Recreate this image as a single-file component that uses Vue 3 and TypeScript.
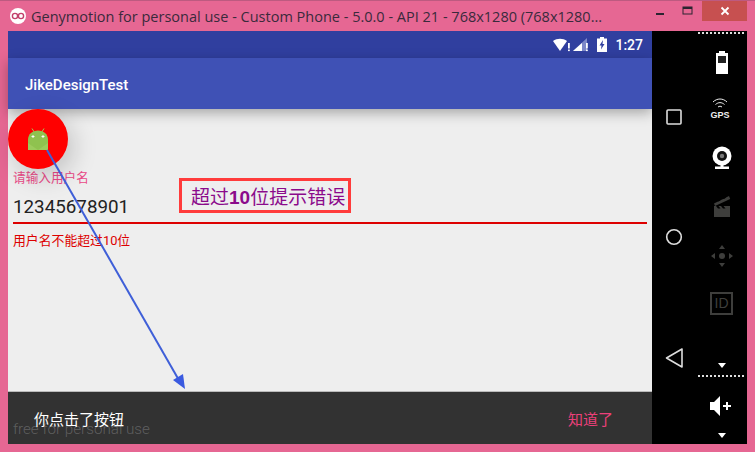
<script setup lang="ts">
const windowTitle = 'Genymotion for personal use - Custom Phone - 5.0.0 - API 21 - 768x1280 (768x1280...'
</script>

<template>
  <div class="window">
    <header class="title-bar">
      <svg class="geny-logo" width="18" height="18" viewBox="0 0 18 18">
        <circle cx="9" cy="9" r="8" fill="#fff" />
        <circle cx="6" cy="9" r="2.6" fill="none" stroke="#c2406c" stroke-width="1.4" />
        <circle cx="12" cy="9" r="2.6" fill="none" stroke="#c2406c" stroke-width="1.4" />
      </svg>
      <span class="title-text">{{ windowTitle }}</span>
      <div class="win-controls">
        <span class="win-btn">
          <svg width="10" height="10" viewBox="0 0 10 10"><rect x="1" y="7" width="8" height="2" fill="#2b2430" /></svg>
        </span>
        <span class="win-btn">
          <svg width="12" height="10" viewBox="0 0 12 10"><rect x="1" y="1" width="9" height="7" fill="none" stroke="#2b2430" stroke-width="1" /><rect x="1" y="1" width="9" height="2" fill="#2b2430" /></svg>
        </span>
        <span class="win-btn close">
          <svg width="10" height="10" viewBox="0 0 10 10"><path d="M1.5 1.5l7 7M8.5 1.5l-7 7" stroke="#fff" stroke-width="1.8" /></svg>
        </span>
      </div>
    </header>

    <div class="window-body">
      <main class="phone">
        <div class="status-bar">
          <svg width="20" height="14" viewBox="0 0 20 14">
            <path d="M0 3C4 0 10 0 14 3L7 13z" fill="#fff" />
            <rect x="15" y="5" width="1.800" height="5.500" fill="#fff" /><rect x="15" y="11.500" width="1.800" height="1.600" fill="#fff" />
          </svg>
          <svg class="signal" width="17" height="14" viewBox="0 0 17 14">
            <path d="M0 13L14 0v13z" fill="#7d88c8" />
            <path d="M0 13L9 5v8z" fill="#fff" />
            <rect x="13" y="5" width="1.800" height="5.500" fill="#fff" /><rect x="13" y="11.500" width="1.800" height="1.600" fill="#fff" />
          </svg>
          <svg class="battery" width="10" height="15" viewBox="0 0 10 15">
            <path d="M3 0h4v1.500h3V15H0V1.500h3z" fill="#fff" />
            <path d="M6 3L2.500 8.500h2L4 12.500l3.500-5.500h-2z" fill="#303f9f" />
          </svg>
          <span class="clock">1:27</span>
        </div>
        <div class="app-bar">JikeDesignTest</div>

        <div class="content">
          <div class="field">
            <label class="field-label">请输入用户名</label>
            <div class="field-value">12345678901</div>
            <div class="field-line"></div>
            <p class="field-error">用户名不能超过10位</p>
          </div>
        </div>

        <div class="snackbar">
          <span class="snack-text">你点击了按钮</span>
          <span class="snack-action">知道了</span>
        </div>

        <!-- 悬浮按钮 -->
        <button class="fab">
          <svg width="24" height="24" viewBox="0 0 24 24">
            <path d="M6 1.500l2.500 4M18 1.500l-2.500 4" stroke="#a4c95a" stroke-width="1" />
            <path d="M2 13C2 7 6.500 3.500 12 3.500s10 3.500 10 9.500v10H2z" fill="#8fc24f" />
            <path d="M2 16l10 7H2zM22 16L12 23h10z" fill="#9ccb5c" />
            <path d="M7 8v3M5.500 9.500h3M17 8v3M15.500 9.500h3" stroke="#fff" stroke-width="0.9" />
          </svg>
        </button>

        <div class="note">超过<b>10</b>位提示错误</div>
        <span class="watermark">free for personal use</span>
      </main>

      <aside class="toolbar">
        <nav class="nav-col">
          <svg width="24" height="24" viewBox="0 0 24 24"><rect x="5" y="5" width="14" height="14" rx="1" fill="none" stroke="#ddd" stroke-width="1.6" /></svg>
          <svg width="24" height="24" viewBox="0 0 24 24"><circle cx="12" cy="12" r="7.300" fill="none" stroke="#ddd" stroke-width="1.6" /></svg>
          <svg width="24" height="24" viewBox="0 0 24 24"><path d="M20 4V22L4.500 13z" fill="none" stroke="#ddd" stroke-width="1.600" stroke-linejoin="round" /></svg>
        </nav>
        <div class="tool-col">
          <span class="dots d1"></span>
          <svg class="t-battery" width="24" height="24" viewBox="0 0 24 24">
            <path d="M9 0h6v2h3v21H6V2h3z" fill="#fff" /><rect x="8" y="5" width="8" height="7" fill="#222" />
          </svg>
          <svg class="t-gps" width="30" height="24" viewBox="0 0 30 24">
            <path d="M6 6c4-4 10-4 14 0M8.500 8.500c3-2.500 6-2.500 9 0M11 11c1.500-1 2.500-1 4 0" fill="none" stroke="#eee" stroke-width="1" />
            <text x="13" y="22" text-anchor="middle" class="gps-text">GPS</text>
          </svg>
          <svg class="t-cam" width="24" height="24" viewBox="0 0 24 24">
            <circle cx="12" cy="10" r="9.500" fill="#fff" /><circle cx="12" cy="10" r="5" fill="#111" /><circle cx="12" cy="10" r="2.200" fill="#777" />
            <rect x="10.500" y="18" width="3" height="3" fill="#fff" /><rect x="5" y="20.500" width="14" height="2.500" fill="#fff" />
          </svg>
          <svg class="t-film" width="24" height="24" viewBox="0 0 24 24">
            <path d="M4 9.500L19 2l1.200 3L5 12z" fill="#3e3e3c" />
            <path d="M7.500 7.700l2-2.700 2.500-.9-2 2.700zM12.500 5.300l2-2.700 2.500-.9-2 2.700z" fill="#000" />
            <rect x="4" y="12" width="16" height="11" fill="#3e3e3c" />
            <path d="M6 12l2 2.500h2.500L8.500 12zM11 12l2 2.500h2.500L13.500 12z" fill="#000" />
          </svg>
          <svg class="t-dpad" width="24" height="24" viewBox="0 0 24 24">
            <circle cx="12" cy="12" r="3" fill="#3e3e3c" />
            <path d="M12 1l3 4H9zM12 23l-3-4h6zM1 12l4-3v6zM23 12l-4 3V9z" fill="#3e3e3c" />
          </svg>
          <div class="t-id">ID</div>
          <span class="mini-arrow a1"></span>
          <span class="dots d2"></span>
          <svg class="t-vol" width="28" height="24" viewBox="0 0 28 24">
            <path d="M2 8h4l6-6v20l-6-6H2z" fill="#fff" />
            <path d="M15 12h8M19 8v8" stroke="#fff" stroke-width="2" />
          </svg>
          <span class="mini-arrow a2"></span>
        </div>
      </aside>
    </div>

    <!-- 标注箭头 -->
    <svg class="pointer" width="755" height="452" viewBox="0 0 755 452">
      <path d="M47 150L180 382" stroke="#3f5fd8" stroke-width="2" />
      <path d="M185 389L173 380L183 374z" fill="#3a5ae0" />
    </svg>
  </div>
</template>

<style>
html,
body {
  margin: 0;
  background: #e66793;
}
</style>

<style scoped>
.window {
  position: relative;
  width: 755px;
  height: 452px;
  box-sizing: border-box;
  display: flex;
  flex-direction: column;
  background: #e66793;
  border-top: 1px solid #bd5a80;
  overflow: hidden;
}

.title-bar {
  height: 30px;
  flex-shrink: 0;
  display: flex;
  align-items: center;
  padding-left: 9px;
  padding-right: 8px;
}

.geny-logo {
  margin-right: 4px;
}

.title-text {
  flex: 1;
  font-family: 'Open Sans', sans-serif;
  font-size: 14.5px;
  color: #3a2a3c;
  white-space: nowrap;
  overflow: hidden;
}

.win-controls {
  display: flex;
  align-self: flex-start;
}

.win-btn {
  width: 28px;
  height: 20px;
  display: flex;
  align-items: center;
  justify-content: center;
}

.win-btn.close {
  width: 45px;
  background: #c75050;
}

.window-body {
  flex: 1;
  display: flex;
  padding: 0 8px 8px;
  min-height: 0;
}

.phone {
  position: relative;
  width: 644px;
  display: flex;
  flex-direction: column;
  font-family: Roboto, 'Noto Sans CJK SC', sans-serif;
}

.status-bar {
  height: 27px;
  flex-shrink: 0;
  display: flex;
  align-items: center;
  justify-content: flex-end;
  padding-right: 9px;
  background: #303f9f;
  color: #fff;
}

.battery {
  margin-left: 7px;
}

.clock {
  margin-left: 8px;
  font-size: 14px;
  font-weight: 500;
}

.app-bar {
  height: 51px;
  flex-shrink: 0;
  box-sizing: border-box;
  padding: 18px 0 0 17px;
  background: #3f51b5;
  color: #fff;
  font-size: 15px;
  font-weight: 500;
  line-height: 18px;
  box-shadow: 0 4px 12px rgba(0, 0, 0, 0.3);
  z-index: 1;
}

.content {
  flex: 1;
  background: #eee;
  border-bottom: 1px solid #bbb;
  padding: 61px 5px 0;
}

.field-label {
  display: block;
  font-size: 12.67px;
  line-height: 16px;
  color: #ea4a88;
}

.field-value {
  margin-top: 9px;
  font-size: 18.8px;
  line-height: 24px;
  color: #222;
}

.field-line {
  height: 2px;
  margin-top: 3px;
  background: #dd0000;
}

.field-error {
  margin: 9px 0 0;
  font-size: 12.85px;
  line-height: 16px;
  color: #dd0000;
}

.snackbar {
  height: 52px;
  flex-shrink: 0;
  display: flex;
  align-items: center;
  justify-content: space-between;
  padding: 0 39px 0 26px;
  background: #323232;
  font-size: 15px;
}

.snack-text {
  color: #fff;
}

.snack-action {
  color: #ec407a;
}

.fab {
  position: absolute;
  left: 0;
  top: 78px;
  width: 60px;
  height: 60px;
  padding: 0;
  border: 0;
  border-radius: 50%;
  background: #f00;
  display: flex;
  align-items: center;
  justify-content: center;
  box-shadow: 6px 8px 24px rgba(0, 0, 0, 0.18);
  z-index: 2;
}

.note {
  position: absolute;
  left: 171px;
  top: 147px;
  width: 172px;
  height: 35px;
  box-sizing: border-box;
  border: 3px solid #ff3b3b;
  padding-left: 9px;
  font-family: 'Noto Sans CJK SC', sans-serif;
  font-size: 19px;
  line-height: 29px;
  color: #8b0a8b;
  white-space: nowrap;
}

.note b {
  font-family: 'Liberation Sans', sans-serif;
}

.watermark {
  position: absolute;
  left: 5px;
  top: 389px;
  font-size: 15.2px;
  font-weight: 300;
  color: rgba(255, 255, 255, 0.22);
  white-space: nowrap;
}

.toolbar {
  flex: 1;
  display: flex;
  background: #000;
}

.nav-col {
  width: 44px;
  padding-top: 74px;
  box-sizing: border-box;
  display: flex;
  flex-direction: column;
  align-items: center;
  gap: 96px;
}

.tool-col {
  flex: 1;
  display: flex;
  flex-direction: column;
  align-items: center;
}

.tool-col svg {
  display: block;
  flex-shrink: 0;
}

.dots {
  width: 47px;
  height: 2px;
  background: repeating-linear-gradient(90deg, #ddd 0 2px, transparent 2px 4px);
}

.d1 {
  margin-top: 1px;
}

.t-battery {
  margin-top: 17px;
}

.t-gps {
  margin-top: 21px;
}

.gps-text {
  font-family: 'Liberation Sans', sans-serif;
  font-size: 9px;
  font-weight: 700;
  fill: #eee;
}

.t-cam {
  margin-top: 26px;
}

.t-film {
  margin-top: 24px;
}

.t-dpad {
  margin-top: 26px;
}

.t-id {
  width: 23px;
  height: 23px;
  box-sizing: border-box;
  margin-top: 24px;
  border: 2px solid #3e3e3c;
  color: #3e3e3c;
  font-family: 'Liberation Sans', sans-serif;
  font-size: 14px;
  line-height: 19px;
  text-align: center;
}

.mini-arrow {
  width: 0;
  height: 0;
  border-left: 4px solid transparent;
  border-right: 4px solid transparent;
  border-top: 5px solid #fff;
}

.a1 {
  margin-top: 48px;
}

.d2 {
  margin-top: 7px;
}

.t-vol {
  margin-top: 17px;
}

.a2 {
  margin-top: 15px;
}

.pointer {
  position: absolute;
  left: 0;
  top: -1px;
  pointer-events: none;
  z-index: 3;
}
</style>
